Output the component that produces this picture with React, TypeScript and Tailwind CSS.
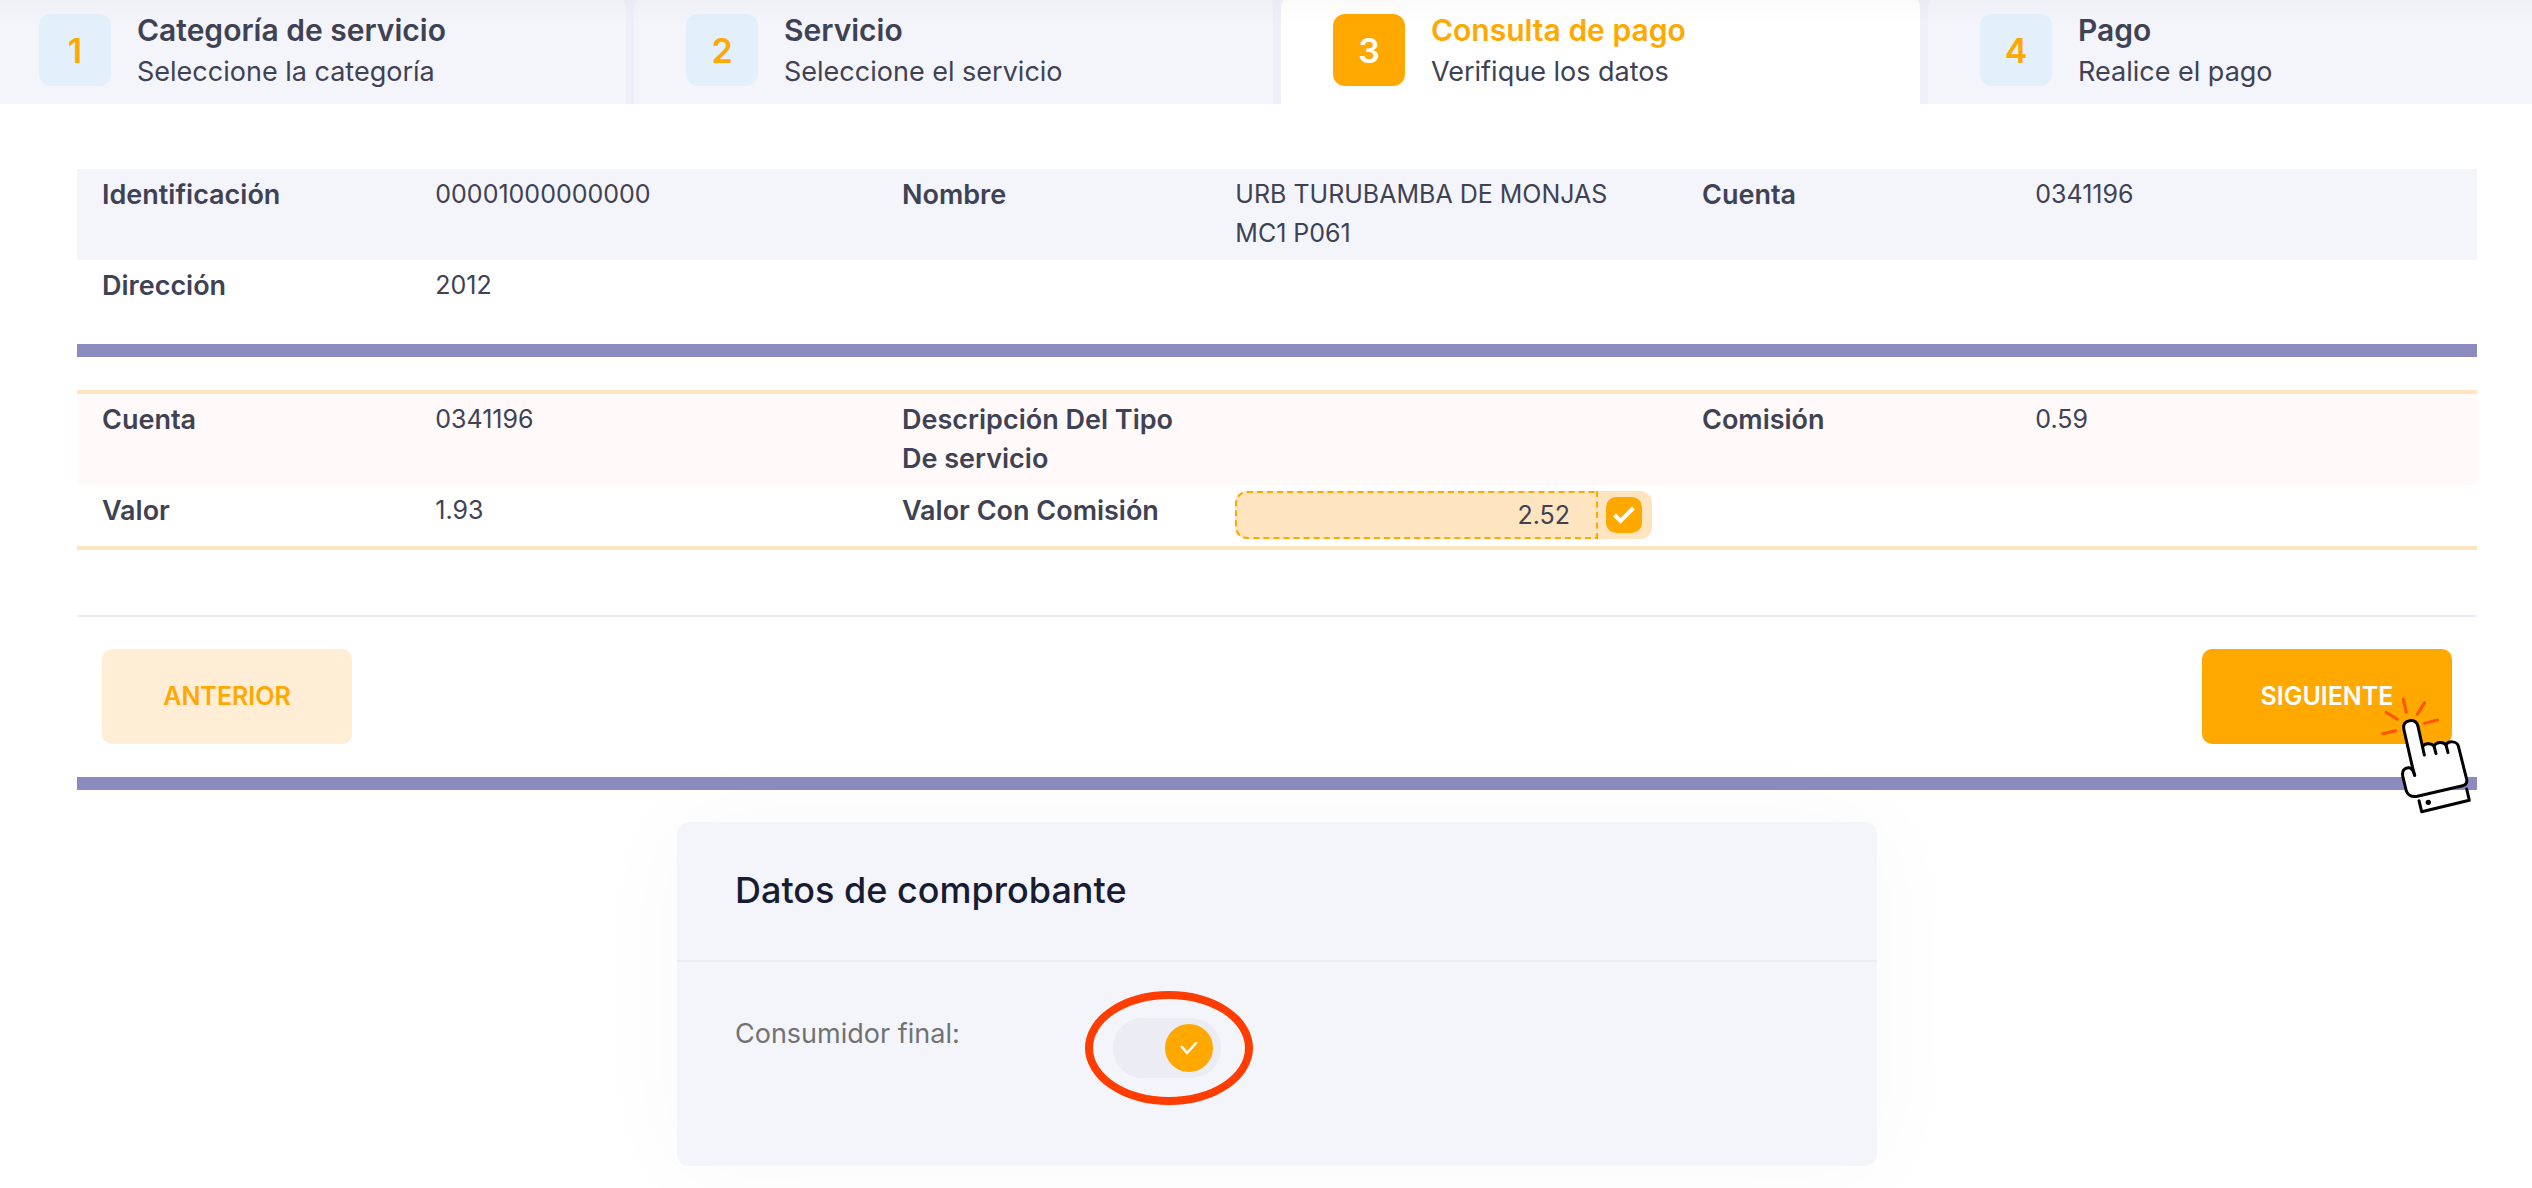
import { useState } from 'react'
import type { ReactNode } from 'react'

interface Step {
  number: number
  title: string
  description: string
}

const steps: Step[] = [
  { number: 1, title: 'Categoría de servicio', description: 'Seleccione la categoría' },
  { number: 2, title: 'Servicio', description: 'Seleccione el servicio' },
  { number: 3, title: 'Consulta de pago', description: 'Verifique los datos' },
  { number: 4, title: 'Pago', description: 'Realice el pago' }
]

function StepTab({ step, active }: { step: Step; active: boolean }) {
  return (
    <li
      aria-current={active ? 'step' : undefined}
      className={`flex items-start gap-[26px] rounded-t-2xl pt-[22px] pb-3 pl-[52px] ${active ? 'bg-white' : 'bg-[#f4f5fa]'}`}
    >
      <span
        className={`flex size-[72px] shrink-0 items-center justify-center rounded-xl text-[34px] font-semibold ${
          active ? 'bg-[#ffa800] text-white' : 'bg-[#e3effa] text-[#ffa800]'
        }`}
      >
        {step.number}
      </span>
      <div className="-mt-1 leading-[41px]">
        <h3 className={`text-[30px] font-semibold ${active ? 'text-[#ffa800]' : ''}`}>{step.title}</h3>
        <p>{step.description}</p>
      </div>
    </li>
  )
}

function Field({ label, htmlFor, children }: { label: string; htmlFor?: string; children?: ReactNode }) {
  return (
    <div className="grid grid-cols-[minmax(0,5fr)_minmax(0,7fr)]">
      <dt className="px-[25px] font-semibold">
        {htmlFor ? <label htmlFor={htmlFor}>{label}</label> : label}
      </dt>
      <dd className="px-[25px] text-[25px]">{children}</dd>
    </div>
  )
}

function Divider() {
  return <div className="h-[13px] bg-[#8b8bc0]" />
}

function ClickHand() {
  return (
    <svg
      viewBox="600 291 276 354"
      className="pointer-events-none absolute top-12 -right-5 z-10 h-[118px] w-[92px]"
      fill="none"
      strokeLinecap="round"
      strokeLinejoin="round"
      aria-hidden="true"
    >
      <g stroke="#ff5500" strokeWidth="9">
        <path d="M670 298l9 39M734 308l-22 35M618 337l34 21M608 401l39-9M733 370l40-10" />
      </g>
      <path d="M717 602l147-36 4 35-143 34z" fill="#fff" />
      <path
        d="M697 522L672 390C668 372 676 364 688 362C702 360 711 366 714 379L728 440C733 430 754 428 762 438C770 424 790 425 798 435C804 422 830 422 835 438L860 538C862 550 858 555 848 557L712 589C694 592 684 586 679 573L669 532C664 512 674 502 687 503C695 504 700 510 704 526Z"
        fill="#fff"
      />
      <g stroke="#000" strokeWidth="9">
        <path d="M704 526C700 510 695 504 687 503C674 502 664 512 669 532L679 573C684 586 694 592 712 589L848 557C858 555 862 550 860 538L835 438C830 422 804 422 798 435C790 425 770 424 762 438C754 428 733 430 728 440" />
        <path d="M697 500L672 390C668 372 676 364 688 362C702 360 711 366 714 379L733 465M762 438l6 23M798 435l6 23M697 500l7 26" />
        <path d="M717 602l8 33 143-34-8-34" />
      </g>
      <circle cx="745" cy="607" r="8" fill="#000" />
    </svg>
  )
}

export default function App() {
  const [amount, setAmount] = useState('2.52')
  const [selected, setSelected] = useState(true)
  const [finalConsumer, setFinalConsumer] = useState(true)

  return (
    <div className="relative min-h-screen overflow-hidden bg-white font-['Inter',sans-serif] text-[27px] leading-[39px] text-[#3f4254]">
      {/* Wizard steps */}
      <ol className="-mt-2 -mr-[35px] -ml-[13px] grid grid-cols-4 gap-2 bg-[#eeeff8]">
        {steps.map((step) => (
          <StepTab key={step.number} step={step} active={step.number === 3} />
        ))}
      </ol>
      <div className="pointer-events-none absolute inset-x-0 top-0 h-6 bg-linear-to-b from-black/2 to-transparent" />

      <main className="pt-[65px] pr-[55px] pb-[22px] pl-[77px]">
        {/* Customer */}
        <dl>
          <div className="grid grid-cols-3 bg-[#f4f5fb] pt-1.5 pb-[7px]">
            <Field label="Identificación">00001000000000</Field>
            <Field label="Nombre">URB TURUBAMBA DE MONJAS MC1 P061</Field>
            <Field label="Cuenta">0341196</Field>
          </div>
          <div className="grid grid-cols-3 pt-1.5 pb-[39px]">
            <Field label="Dirección">2012</Field>
          </div>
        </dl>

        <Divider />

        {/* Amounts */}
        <dl className="mt-[33px] border-y-4 border-[#ffe4c0]">
          <div className="grid grid-cols-3 bg-[#fff9f9] pt-1.5 pb-[7px]">
            <Field label="Cuenta">0341196</Field>
            <Field label="Descripción Del Tipo De servicio" />
            <Field label="Comisión">0.59</Field>
          </div>
          <div className="grid grid-cols-3 pt-1.5 pb-[7px]">
            <Field label="Valor">1.93</Field>
            <Field label="Valor Con Comisión" htmlFor="total">
              <div className="flex h-12 items-center rounded-xl bg-[#ffe4c0]">
                <input
                  id="total"
                  type="text"
                  value={amount}
                  onChange={(e) => setAmount(e.target.value)}
                  className="h-full min-w-0 flex-1 rounded-l-xl border-2 border-dashed border-[#ffa800] pr-[26px] text-right outline-none"
                />
                <div className="relative mr-2.5 ml-2 size-9">
                  <input
                    type="checkbox"
                    aria-label="Pagar este valor"
                    checked={selected}
                    onChange={(e) => setSelected(e.target.checked)}
                    className="peer block size-9 cursor-pointer appearance-none rounded-[10px] bg-white checked:bg-[#ffa800]"
                  />
                  <svg
                    viewBox="0 0 36 36"
                    className="pointer-events-none absolute inset-0 hidden peer-checked:block"
                    fill="none"
                    stroke="#fff"
                    strokeWidth="4"
                  >
                    <path d="M8.5 18L14.5 24L27.5 11" />
                  </svg>
                </div>
              </div>
            </Field>
          </div>
        </dl>

        {/* Actions */}
        <div className="mt-[65px] flex justify-between border-t-2 border-[#ebecf4] px-[25px] pt-8 pb-[33px]">
          <button
            type="button"
            className="h-[95px] w-[250px] cursor-pointer rounded-[10px] bg-[#ffedd6] text-[25px] font-semibold text-[#ffa800]"
          >
            ANTERIOR
          </button>
          <div className="relative">
            <button
              type="button"
              className="h-[95px] w-[250px] cursor-pointer rounded-[10px] bg-[#ffa800] text-[25px] font-semibold text-white"
            >
              SIGUIENTE
            </button>
            <ClickHand />
          </div>
        </div>

        <Divider />

        {/* Receipt */}
        <section className="mx-auto mt-8 w-1/2 rounded-xl bg-[#f4f5fa] shadow-[0_0_100px_rgba(0,0,0,0.03)]">
          <header className="border-b-2 border-[#ebecf4] px-[58px] pt-12 pb-[50px]">
            <h2 className="text-[36px] leading-10 font-medium text-[#181c32]">Datos de comprobante</h2>
          </header>
          <div className="grid grid-cols-[378px_1fr] px-[58px] pt-14 pb-[88px]">
            <label htmlFor="final-consumer" className="-mt-1 text-[#707274]">
              Consumidor final:
            </label>
            <div className="relative h-[60px] w-[108px]">
              <input
                id="final-consumer"
                type="checkbox"
                role="switch"
                checked={finalConsumer}
                onChange={(e) => setFinalConsumer(e.target.checked)}
                className="peer block size-full cursor-pointer appearance-none rounded-full bg-[#ebecf4]"
              />
              <span className="pointer-events-none absolute top-1.5 left-2 flex size-12 items-center justify-center rounded-full bg-white peer-checked:left-[52px] peer-checked:bg-[#ffa800]">
                <svg viewBox="0 0 20 14" className="h-3.5 w-5" fill="none" stroke="#fff" strokeWidth="2.5" strokeLinecap="round" strokeLinejoin="round">
                  <path d="M3 6L8 12L17 2" />
                </svg>
              </span>
              {/* Highlight ring */}
              <div className="pointer-events-none absolute -inset-y-[27px] -right-8 -left-7 rounded-[50%] border-8 border-[#ff3d00]" />
            </div>
          </div>
        </section>
      </main>
    </div>
  )
}
